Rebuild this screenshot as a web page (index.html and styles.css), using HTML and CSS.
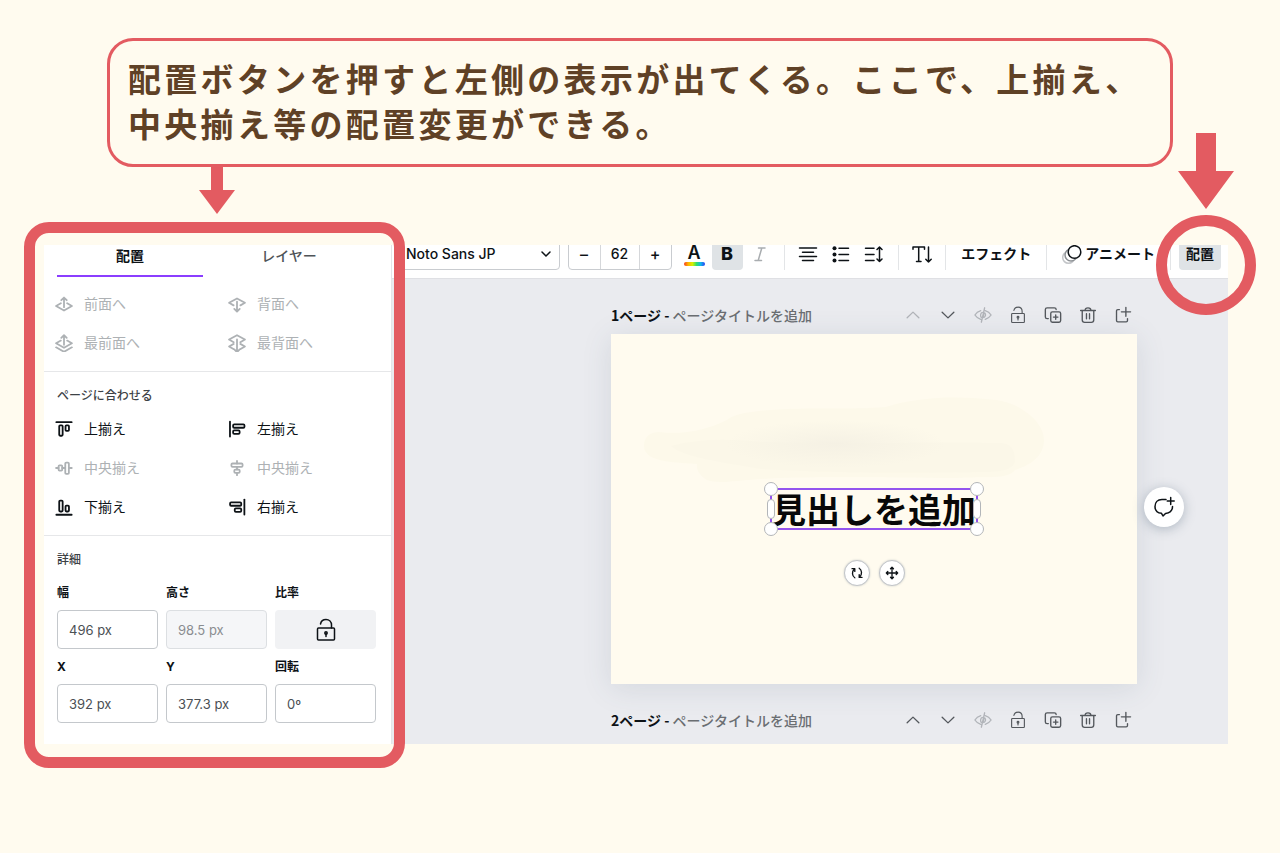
FILE: index.html
```html
<!DOCTYPE html>
<html lang="ja">
<head>
<meta charset="utf-8">
<meta name="viewport" content="width=device-width, initial-scale=1">
<title>配置ボタンの使い方</title>
<link rel="stylesheet" href="styles.css">
</head>
<body>
<svg class="defs" aria-hidden="true">
  <symbol id="forward" viewBox="0 0 20 20"><path d="M10 13.5V3M7 5.8 10 2.8 13 5.8M6.5 9.2 1.2 12.2 10 17.2 18.8 12.2 13.5 9.2"/></symbol>
  <symbol id="front" viewBox="0 0 20 20"><path d="M10 12V1.5M7 4.3 10 1.3 13 4.3M6.5 7.3 1.2 10.3 10 15.3 18.8 10.3 13.5 7.3M1.2 14.8 10 19.8 18.8 14.8"/></symbol>
  <symbol id="backward" viewBox="0 0 20 20"><path d="M10 7.5V18M7 15.5 10 18.5 13 15.5M6.2 11.5 1.2 8.7 10 3.8 18.8 8.7 13.8 11.5"/></symbol>
  <symbol id="back" viewBox="0 0 20 20"><path d="M10 6V19.500M7 17.200 10 20.200 13 17.200M6.300 9.200 1.200 6.200 10 1.300 18.800 6.200 13.700 9.200M6.300 11 1.200 13.800 6 16.600M13.700 11 18.800 13.800 14 16.600"/></symbol>
  <symbol id="al-top" viewBox="0 0 20 20"><path d="M1.5 2.4H18.5"/><rect x="4.7" y="6" width="3.8" height="11.5" rx="1"/><rect x="11.7" y="6" width="3.8" height="6" rx="1"/></symbol>
  <symbol id="al-bottom" viewBox="0 0 20 20"><path d="M1.5 18.6H18.5"/><rect x="4.7" y="3" width="3.8" height="12" rx="1"/><rect x="11.7" y="8.4" width="3.8" height="6.6" rx="1"/></symbol>
  <symbol id="al-mid" viewBox="0 0 20 20"><path d="M1.2 10H4M8 10H11M16 10H18.6"/><rect x="4" y="7" width="4" height="6" rx="1"/><rect x="11.4" y="4" width="4" height="12.6" rx="1"/></symbol>
  <symbol id="al-left" viewBox="0 0 20 20"><path d="M2.2 1.8V18.4"/><rect x="5.7" y="4.8" width="12.6" height="3.8" rx="1.2"/><rect x="5.7" y="11.6" width="7.2" height="3.8" rx="1.2"/></symbol>
  <symbol id="al-right" viewBox="0 0 20 20"><path d="M18.2 1.8V18.4"/><rect x="2.3" y="4.8" width="12.4" height="3.8" rx="1.2"/><rect x="7.5" y="11.6" width="7.2" height="3.8" rx="1.2"/></symbol>
  <symbol id="al-center" viewBox="0 0 20 20"><path d="M10 2.2V5M10 9V11.6M10 15.6V18"/><rect x="3.8" y="5" width="12.4" height="3.8" rx="1.2"/><rect x="7" y="11.8" width="6" height="3.6" rx="1.2"/></symbol>
  <symbol id="lock" viewBox="0 0 24 24"><rect x="3.500" y="10" width="17" height="12" rx="1"/><path d="M6.500 6C7 3.400 9.200 1.500 12 1.500 15.200 1.500 17.500 3.900 17.500 7V10M12 15V18.500"/><circle cx="12" cy="15" r="1.200"/></symbol>
  <symbol id="up" viewBox="0 0 20 20"><path d="M3.500 13 10 6.800 16.500 13"/></symbol>
  <symbol id="down" viewBox="0 0 20 20"><path d="M3.500 7 10 13.200 16.500 7"/></symbol>
  <symbol id="hide" viewBox="0 0 20 20"><path d="M7.500 5.200C4.800 6 2.300 8 1 10 2.300 12 4.800 14 7.500 14.800M12.500 5.200C15.200 6 17.700 8 19 10 17.700 12 15.200 14 12.500 14.800M11.800 2 8.200 18M9.200 7.200C7.200 8 6.800 11 8 12.500M12 7.800C13.400 9.200 13 12 10.800 12.900M11 8.500 10.200 11.800"/></symbol>
  <symbol id="copy" viewBox="0 0 20 20"><path d="M4.800 14H3.500C2.300 14 1.500 13.300 1.500 12.200V4C1.500 2.800 2.300 2 3.500 2H11.500C12.700 2 13.500 2.800 13.500 4"/><rect x="7.500" y="6.500" width="11" height="11.500" rx="1.800"/><path d="M13 9.800V14.800M10.500 12.300H15.500"/></symbol>
  <symbol id="trash" viewBox="0 0 20 20"><path d="M1.800 5H18.200M6.800 4.800C6.800 3.200 7.800 2 10 2S13.200 3.200 13.200 4.800M3.600 5V15.400C3.600 17.200 4.600 18.200 6.300 18.200H13.700C15.400 18.200 16.400 17.200 16.400 15.400V5M8.300 8.600V14.200M11.700 8.600V14.200"/></symbol>
  <symbol id="addpage" viewBox="0 0 20 20"><path d="M6 4H4.300C3.300 4 2.800 4.500 2.800 5.500V16C2.800 17 3.300 17.600 4.300 17.600H13.500C14.500 17.600 15 17 15 16V14M13.200 1.500V11.500M8.200 6.500H18.400"/></symbol>
</svg>

<main class="slide">
  <div class="banner">
    <p class="banner-text">配置ボタンを押すと左側の表示が出てくる。ここで、上揃え、中央揃え等の配置変更ができる。</p>
    <svg class="arrow arrow-left" viewBox="0 0 36 50" aria-hidden="true"><path d="M12 0H24V26H36L18 50 0 26H12Z"/></svg>
  </div>

  <div class="app">
    <aside class="panel">
      <div class="panel-view">
        <div class="tabs" role="tablist">
          <button class="tab active" role="tab" aria-selected="true">配置</button>
          <button class="tab" role="tab" aria-selected="false">レイヤー</button>
        </div>
        <div class="actions">
          <button class="action" disabled><svg class="ic"><use href="#forward"/></svg>前面へ</button>
          <button class="action" disabled><svg class="ic"><use href="#backward"/></svg>背面へ</button>
          <button class="action" disabled><svg class="ic"><use href="#front"/></svg>最前面へ</button>
          <button class="action" disabled><svg class="ic"><use href="#back"/></svg>最背面へ</button>
        </div>
        <section class="section">
          <h2 class="section-title">ページに合わせる</h2>
          <div class="actions">
            <button class="action"><svg class="ic"><use href="#al-top"/></svg>上揃え</button>
            <button class="action"><svg class="ic"><use href="#al-left"/></svg>左揃え</button>
            <button class="action" disabled><svg class="ic"><use href="#al-mid"/></svg>中央揃え</button>
            <button class="action" disabled><svg class="ic"><use href="#al-center"/></svg>中央揃え</button>
            <button class="action"><svg class="ic"><use href="#al-bottom"/></svg>下揃え</button>
            <button class="action"><svg class="ic"><use href="#al-right"/></svg>右揃え</button>
          </div>
        </section>
        <section class="section">
          <h2 class="section-title">詳細</h2>
          <div class="fields">
            <div class="field"><label for="w">幅</label><input id="w" type="text" value="496 px"></div>
            <div class="field"><label for="h">高さ</label><input id="h" type="text" value="98.5 px" disabled></div>
            <div class="field"><label for="ratio">比率</label><button id="ratio" class="ratio"><svg class="ic-lg"><use href="#lock"/></svg></button></div>
            <div class="field"><label for="x">X</label><input id="x" type="text" value="392 px"></div>
            <div class="field"><label for="y">Y</label><input id="y" type="text" value="377.3 px"></div>
            <div class="field"><label for="r">回転</label><input id="r" type="text" value="0º"></div>
          </div>
        </section>
      </div>
      <div class="frame"></div>
    </aside>

    <div class="editor">
      <div class="toolbar">
        <div class="font">
          <select class="font-select" aria-label="フォント"><option>Noto Sans JP</option></select>
          <svg class="font-chevron" viewBox="0 0 12 12" aria-hidden="true"><path d="M2 4 6 8 10 4"/></svg>
        </div>
        <div class="stepper">
          <button class="step" aria-label="小さく">–</button>
          <input class="step-value" type="text" value="62" aria-label="フォントサイズ">
          <button class="step" aria-label="大きく">+</button>
        </div>
        <div class="group">
          <button class="tool color" aria-label="テキストの色"><span class="color-letter">A</span><span class="rainbow"></span></button>
          <button class="tool bold on" aria-label="太字">B</button>
          <button class="tool italic" aria-label="斜体" disabled><svg class="ic" viewBox="0 0 20 20"><path d="M8.500 4H15M5 16.500H11.500M11.800 4 8.200 16.500"/></svg></button>
        </div>
        <span class="rule"></span>
        <div class="group">
          <button class="tool" aria-label="配置揃え"><svg class="ic" viewBox="0 0 20 20"><path d="M1.500 4H18.500M4.500 8.200H15.500M1.500 12.400H18.500M4.500 16.600H15.500"/></svg></button>
          <button class="tool" aria-label="リスト"><svg class="ic" viewBox="0 0 20 20"><path d="M8 4.200H17.500M8 10.400H17.500M8 16.600H17.500"/><g class="dots"><circle cx="3.500" cy="4.200" r="2"/><circle cx="3.500" cy="10.400" r="2"/><circle cx="3.500" cy="16.600" r="2"/></g></svg></button>
          <button class="tool" aria-label="行間"><svg class="ic" viewBox="0 0 20 20"><path d="M1.500 4.200H10M1.500 10.400H10M1.500 16.600H10M15.500 3V17.500M13 5.500 15.500 3 18 5.500M13 15 15.500 17.500 18 15"/></svg></button>
        </div>
        <span class="rule"></span>
        <button class="tool" aria-label="縦書き"><svg class="ic" viewBox="0 0 20 20"><path d="M1 5.300V3H12.500V5.300M6.700 3V17.500M4.500 17.500H9M16.500 3V18M13.800 15.300 16.500 18 19.200 15.300"/></svg></button>
        <span class="rule"></span>
        <button class="word">エフェクト</button>
        <span class="rule"></span>
        <button class="word"><svg class="ic" viewBox="0 0 20 20"><circle cx="6.500" cy="13.500" r="5.800" class="ghost"/><circle cx="9" cy="11" r="6" class="ghost-mid"/><circle cx="12.500" cy="8" r="6.300" class="solid"/></svg>アニメート</button>
        <span class="rule"></span>
        <button class="word on">配置</button>
      </div>

      <div class="stage">
        <div class="page-head">
          <p class="page-name"><b>1ページ -</b> ページタイトルを追加</p>
          <div class="page-tools">
            <button class="pt" aria-label="上へ" disabled><svg class="ic"><use href="#up"/></svg></button>
            <button class="pt" aria-label="下へ"><svg class="ic"><use href="#down"/></svg></button>
            <button class="pt" aria-label="非表示" disabled><svg class="ic"><use href="#hide"/></svg></button>
            <button class="pt" aria-label="ロック"><svg class="ic"><use href="#lock"/></svg></button>
            <button class="pt" aria-label="複製"><svg class="ic"><use href="#copy"/></svg></button>
            <button class="pt" aria-label="削除"><svg class="ic"><use href="#trash"/></svg></button>
            <button class="pt" aria-label="ページを追加"><svg class="ic"><use href="#addpage"/></svg></button>
          </div>
        </div>
        <div class="page">
          <svg class="wash" viewBox="0 0 526 350" aria-hidden="true">
            <defs>
              <radialGradient id="shade"><stop offset="0" stop-color="#f5f1e4"/><stop offset="1" stop-color="#f5f1e4" stop-opacity="0"/></radialGradient>
            </defs>
            <path fill="#fdf9ea" d="M33 112C33 103 39 98 48 98 72 101 96 96 116 86 123 79 145 77 160 76 195 73 240 76 275 73 310 62 350 62 385 66 410 69 433 88 433 106 433 122 420 131 404 136 396 146 375 142 345 144 280 144 200 142 150 145 120 147 108 150 96 146 89 142 85 136 86 130 70 128 33 130 33 112Z"/>
            <path fill="#fbf7e8" d="M60 112C90 104 120 105 150 108 240 110 330 108 390 109 402 110 404 118 404 128 400 136 392 138 370 138 260 140 200 138 150 135 110 128 75 124 60 112Z"/>
            <ellipse cx="225" cy="110" rx="110" ry="24" fill="url(#shade)"/>
          </svg>
          <div class="selection">
            <h1 class="headline">見出しを追加</h1>
            <span class="grip left"></span><span class="grip right"></span>
            <span class="knob tl"></span><span class="knob tr"></span><span class="knob bl"></span><span class="knob br"></span>
            <div class="float">
              <button class="round" aria-label="回転"><svg class="ic-sm" viewBox="0 0 16 16"><path d="M5.500 13.500C2.300 11.500 1.800 6.500 5 3.500M2.300 3H5.500V6.200M10.500 2.500C13.700 4.500 14.200 9.500 11 12.500M13.700 13H10.500V9.800"/></svg></button>
              <button class="round" aria-label="移動"><svg class="ic-sm" viewBox="0 0 16 16"><path d="M8 1.500V14.500M1.500 8H14.500M6.300 3.200 8 1.500 9.700 3.200M6.300 12.800 8 14.500 9.700 12.800M3.200 6.300 1.500 8 3.200 9.700M12.800 6.300 14.500 8 12.800 9.700"/></svg></button>
            </div>
          </div>
          <button class="comment" aria-label="コメントを追加"><svg class="ic-lg" viewBox="0 0 24 24"><path d="M14 4.500H10C5.500 4.500 3 7.500 3 11.500 3 15.500 5.500 18 9.500 18.300L11 21 13.500 18.500C18 18 20.500 15.500 20.500 11.500M18.700 2.500V9.500M15.200 6H22.200"/></svg></button>
        </div>
        <div class="page-head">
          <p class="page-name"><b>2ページ -</b> ページタイトルを追加</p>
          <div class="page-tools">
            <button class="pt" aria-label="上へ"><svg class="ic"><use href="#up"/></svg></button>
            <button class="pt" aria-label="下へ"><svg class="ic"><use href="#down"/></svg></button>
            <button class="pt" aria-label="非表示" disabled><svg class="ic"><use href="#hide"/></svg></button>
            <button class="pt" aria-label="ロック"><svg class="ic"><use href="#lock"/></svg></button>
            <button class="pt" aria-label="複製"><svg class="ic"><use href="#copy"/></svg></button>
            <button class="pt" aria-label="削除"><svg class="ic"><use href="#trash"/></svg></button>
            <button class="pt" aria-label="ページを追加"><svg class="ic"><use href="#addpage"/></svg></button>
          </div>
        </div>
      </div>
    </div>

    <svg class="arrow arrow-right" viewBox="0 0 56 76" aria-hidden="true"><path d="M18 0H38V38H56L28 76 0 38H18Z"/></svg>
    <div class="ring"></div>
  </div>
</main>
</body>
</html>
```

FILE: styles.css
```css
:root {
  --accent: #e35b61;
  --ink: #0d1216;
  --cream: #fffbef;
  --violet: #8b3dff;
}

* { box-sizing: border-box; }

body {
  margin: 0;
  background: var(--cream);
  color: var(--ink);
  font: 14px/20px "Inter", "Noto Sans CJK JP", sans-serif;
}

button, input, select {
  margin: 0;
  padding: 0;
  border: 0;
  background: none;
  color: inherit;
  font: inherit;
}

h1, h2, p { margin: 0; }

.defs { position: absolute; width: 0; height: 0; }

.ic, .ic-sm, .ic-lg {
  flex: none;
  width: 20px;
  height: 20px;
  fill: none;
  stroke: currentColor;
  stroke-width: 1.5;
  stroke-linecap: round;
  stroke-linejoin: round;
  overflow: visible;
}
.ic-sm { width: 14px; height: 14px; }
.ic-lg { width: 24px; height: 24px; }

.slide {
  display: flex;
  flex-direction: column;
  gap: 78px;
  padding: 38px 52px 40px 44px;
}

/* Explanation banner */
.banner {
  position: relative;
  margin: 0 55px 0 63px;
  padding: 15px 18px 18px;
  border: 3px solid var(--accent);
  border-radius: 26px;
}
.banner-text {
  color: #5f4126;
  font: 700 33px/45px "Noto Sans CJK JP", sans-serif;
  letter-spacing: 0.1em;
}
.arrow { position: absolute; fill: var(--accent); }
.arrow-left { left: 89px; top: 100%; width: 36px; height: 50px; }
.arrow-right { right: -6px; top: -112px; width: 56px; height: 76px; }
.ring {
  position: absolute;
  right: -28px;
  top: -30px;
  width: 100px;
  height: 100px;
  border: 11px solid var(--accent);
  border-radius: 50%;
}

.app { position: relative; display: flex; }

/* Side panel */
.panel { position: relative; flex: none; width: 348px; background: #fff; border-right: 1px solid #e4e5e9; }
.frame {
  position: absolute;
  z-index: 2;
  inset: -23px -14px -24px -20px;
  border: 11px solid var(--accent);
  border-radius: 25px;
  pointer-events: none;
}
.tabs { display: flex; gap: 13px; padding: 0 13px; }
.tab {
  width: 146px;
  height: 32px;
  padding-bottom: 8px;
  border-bottom: 2px solid transparent;
  color: #4f5458;
  font-weight: 500;
}
.tab.active { border-color: var(--violet); color: var(--ink); font-weight: 700; }
.actions {
  display: grid;
  grid-template-columns: 173px 1fr;
  padding: 7px 0 9px 11px;
}
.action {
  display: flex;
  align-items: center;
  gap: 11px;
  height: 39px;
  text-align: left;
}
.action .ic { width: 18px; height: 18px; stroke-width: 2; }
.action:disabled { color: #adb1b4; }
.section { border-top: 1px solid #e6e7e9; padding-top: 14px; }
.section-title { padding: 0 13px; color: #3d4246; font-size: 12px; line-height: 20px; font-weight: 500; }
.section .actions { padding: 3px 0 9px 11px; }
.fields {
  display: grid;
  grid-template-columns: repeat(3, 101px);
  gap: 9px 8px;
  padding: 14px 13px 21px;
}
.field label { display: block; margin-bottom: 8px; font-size: 12px; line-height: 18px; font-weight: 700; }
.field input, .ratio {
  display: flex;
  align-items: center;
  justify-content: center;
  width: 100%;
  height: 39px;
  border-radius: 4px;
}
.field input { padding: 0 11px; border: 1px solid #c4c8cc; color: #4b5054; font-size: 13px; }
.field input:disabled { background: #f5f6f8; border-color: #dcdfe2; color: #8a8d90; }
.ratio { background: #f1f2f4; }

/* Toolbar */
.editor { flex: 1; min-width: 0; display: flex; flex-direction: column; background: #eaebef; }
.toolbar {
  display: flex;
  align-items: flex-end;
  height: 34px;
  padding: 0 7px 8px 2px;
  background: #fff;
  border-bottom: 1px solid #dfe0e4;
  overflow: hidden;
}
.font { position: relative; flex: 0 1 167px; }
.font-select {
  appearance: none;
  width: 100%;
  height: 32px;
  padding: 0 11px;
  border: 1px solid #c9ccd0;
  border-radius: 4px;
  font-weight: 500;
}
.font-chevron { position: absolute; right: 8px; top: 10px; width: 12px; height: 12px; fill: none; stroke: var(--ink); stroke-width: 1.5; stroke-linecap: round; }
.stepper {
  display: flex;
  flex: none;
  margin: 0 7px 0 8px;
  width: 104px;
  height: 32px;
  border: 1px solid #c9ccd0;
  border-radius: 4px;
}
.step { flex: 1; font-size: 16px; font-weight: 500; }
.step-value {
  width: 40px;
  border: 1px solid #d5d7da;
  border-width: 0 1px;
  text-align: center;
  font-weight: 500;
}
.group { display: flex; gap: 2px; }
.tool {
  display: flex;
  align-items: center;
  justify-content: center;
  width: 31px;
  height: 32px;
  border-radius: 4px;
}
.tool:disabled { color: #a9adb0; }
.on { background: #dfe3e6; }
.color { flex-direction: column; justify-content: flex-end; gap: 1px; padding-bottom: 4px; }
.color-letter { font-size: 18px; line-height: 16px; font-weight: 600; }
.rainbow {
  width: 21px;
  height: 4px;
  border-radius: 2px;
  background: linear-gradient(90deg, #f53b20, #ffb300 20%, #d8f000 40%, #2ee06a 60%, #10b5f0 80%, #2b3cf0);
}
.bold { font-size: 18px; line-height: 16px; font-weight: 800; }
.dots { fill: currentColor; stroke: none; }
.ghost { stroke: #c3c5c8; }
.ghost-mid { stroke: #8c9094; fill: #fff; }
.solid { fill: #fff; }
.rule { flex: none; width: 1px; height: 28px; margin: 0 8px; background: #e3e5e7; }
.word {
  display: flex;
  flex: none;
  align-items: center;
  justify-content: center;
  gap: 3px;
  height: 32px;
  padding: 0 7px;
  border-radius: 4px;
  font-weight: 600;
  white-space: nowrap;
}
.word.on { font-weight: 700; }

/* Canvas */
.stage { flex: 1; padding: 22px 91px 10px 219px; }
.page-head { display: flex; align-items: center; justify-content: space-between; height: 28px; }
.page-name { color: #6a6e72; font-family: "Noto Sans CJK JP", sans-serif; font-weight: 500; white-space: nowrap; }
.page-name b { color: var(--ink); }
.page-tools { display: flex; gap: 7px; }
.pt { display: flex; align-items: center; justify-content: center; width: 28px; height: 28px; color: #54585d; }
.pt .ic { width: 18px; height: 18px; }
.pt:disabled { color: #b1b4b9; }
.page {
  position: relative;
  display: flex;
  align-items: center;
  justify-content: center;
  aspect-ratio: 526 / 350;
  margin: 5px 0 22px;
  background: var(--cream);
  box-shadow: 0 4px 28px rgba(64, 87, 109, 0.13);
}
.wash { position: absolute; inset: 0; width: 100%; height: 100%; }
.selection { position: relative; border: 2px solid #9354ee; }
.headline { color: #080808; font: 700 34px/38px "Noto Sans CJK JP", sans-serif; white-space: nowrap; }
.knob, .grip { position: absolute; background: #fff; border: 1px solid #b3b6b9; }
.knob { width: 14px; height: 14px; border-radius: 50%; }
.tl, .tr { top: -8px; }
.bl, .br { bottom: -8px; }
.tl, .bl { left: -8px; }
.tr, .br { right: -8px; }
.grip { top: 9px; width: 8px; height: 20px; border-radius: 4px; }
.left { left: -5px; }
.right { right: -5px; }
.float {
  position: absolute;
  left: 0;
  right: 0;
  top: 70px;
  display: flex;
  justify-content: center;
  gap: 9px;
}
.round {
  display: flex;
  align-items: center;
  justify-content: center;
  width: 26px;
  height: 26px;
  border: 1px solid #c2c5c9;
  border-radius: 50%;
  background: #fff;
  box-shadow: 0 0 2px rgba(64, 87, 109, 0.3);
}
.comment {
  position: absolute;
  right: -47px;
  top: calc(50% - 22px);
  display: flex;
  align-items: center;
  justify-content: center;
  width: 40px;
  height: 40px;
  border-radius: 50%;
  background: #fff;
  box-shadow: 0 2px 12px rgba(64, 87, 109, 0.35);
}
```
